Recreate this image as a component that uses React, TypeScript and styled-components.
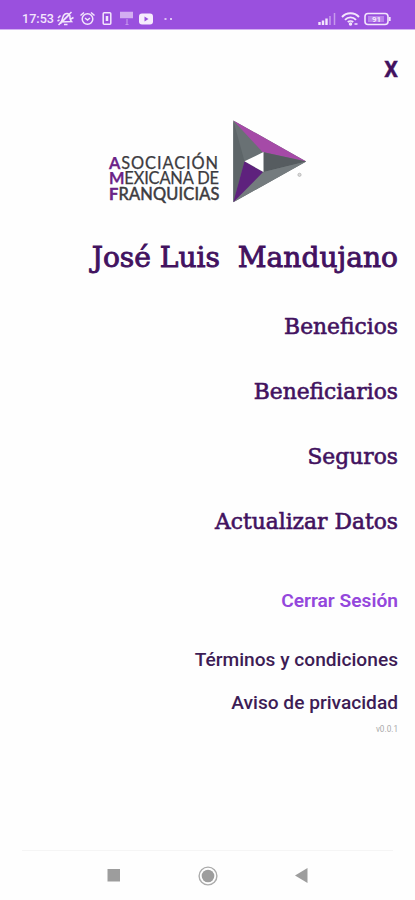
import React from "react";
import styled, { createGlobalStyle } from "styled-components";

const GlobalStyle = createGlobalStyle`
  * { box-sizing: border-box; }
  body { margin: 0; background: #fefefe; }
`;

const slab = `"DejaVu Serif", serif`;
const sans = `Roboto, sans-serif`;
const ink = "#42125f";

const Screen = styled.div`
  width: 100%;
  height: 900px;
  display: flex;
  flex-direction: column;
  overflow: hidden;
  background: #fefefe;
  font-family: ${sans};
`;

const StatusBar = styled.header`
  height: 30px;
  flex: none;
  display: flex;
  justify-content: space-between;
  align-items: flex-end;
  padding: 0 23px 2px 22px;
  background: #9a50de;
  border-bottom: 1px solid #d3b0f1;
  color: #f3e6fc;
`;

const Clock = styled.span`
  font-size: 12.6px;
  font-weight: 500;
  line-height: 16px;
  width: 35px;
`;

const StatusGroup = styled.div`
  display: flex;
  align-items: center;
  height: 17px;
`;

const StatusIcon = styled.svg<{ $gap?: number }>`
  display: block;
  flex: none;
  margin-left: ${(p) => p.$gap ?? 0}px;
  fill: none;
  stroke: #f3e6fc;
  stroke-width: 1.5;
`;

const Content = styled.main`
  flex: 1;
  display: flex;
  flex-direction: column;
  align-items: flex-end;
  padding: 28px 17px 0 0;
`;

const CloseButton = styled.button`
  border: 0;
  padding: 0;
  background: none;
  height: 24px;
  font: 700 21.5px/24px ${sans};
  color: ${ink};
  -webkit-text-stroke: 0.4px ${ink};
`;

const Brand = styled.div`
  align-self: flex-start;
  display: flex;
  align-items: flex-end;
  height: 84px;
  margin: 38px 0 34px 109px;
`;

const BrandName = styled.div`
  width: 124px;
  padding-bottom: 3px;
  font-family: Lato, sans-serif;
  font-size: 16.4px;
  line-height: 15.5px;
  color: #3c3b3f;
`;

const BrandLine = styled.div<{ $tracking: number; $bold?: boolean }>`
  white-space: nowrap;
  letter-spacing: ${(p) => p.$tracking}px;
  -webkit-text-stroke: ${(p) => (p.$bold ? 0.5 : 0.25)}px;
`;

const Initial = styled.span`
  color: #6b2387;
  font-weight: 700;
`;

const BrandMark = styled.svg`
  display: block;
`;

const UserName = styled.h1`
  margin: 0 0 16px;
  font: 400 28.1px/40px ${slab};
  white-space: pre;
  color: ${ink};
  -webkit-text-stroke: 0.9px ${ink};
`;

const Menu = styled.nav`
  display: flex;
  flex-direction: column;
  align-items: flex-end;
  margin-bottom: 32px;
`;

const MenuItem = styled.a`
  font: 400 21.8px/65px ${slab};
  color: ${ink};
  -webkit-text-stroke: 0.6px ${ink};
`;

const LogoutLink = styled.a`
  margin-bottom: 23px;
  font-size: 19.2px;
  font-weight: 600;
  line-height: 30px;
  color: #9447dc;
`;

const LegalLink = styled.a`
  font-size: 19.15px;
  font-weight: 500;
  line-height: 42.5px;
  color: #3d1c55;
`;

const Version = styled.small`
  font-size: 8.2px;
  line-height: 10px;
  color: #aaa;
`;

const SystemNav = styled.footer`
  flex: none;
  height: 50px;
  margin: 0 22px;
  border-top: 1px solid #f5f5f5;
  display: flex;
  justify-content: space-between;
  align-items: center;
  padding: 0 85px;
`;

const NavIcon = styled.svg`
  display: block;
  fill: #9d9d9d;
`;

const MENU = ["Beneficios", "Beneficiarios", "Seguros", "Actualizar Datos"];
const LEGAL = ["Términos y condiciones", "Aviso de privacidad"];

export default function App() {
  return (
    <Screen>
      <GlobalStyle />
      <StatusBar>
        <StatusGroup>
          <Clock>17:53</Clock>
          <StatusIcon width="17" height="17" viewBox="0 0 17 17">
            <path d="M4 12c2-2 1-6.500 4-8c3-1.500 5.500 .5 5 4c0 2 .5 2.500 1.500 3.500zM7 14.500h3.500M1.500 15L14.500 2M3.500 13.500L12 5M1 8l2.500-2.500M.5 11l2-1M14 9l2.500-1.500" />
          </StatusIcon>
          <StatusIcon $gap={5} width="17" height="17" viewBox="0 0 17 17">
            <circle cx="8.500" cy="9" r="5.300" />
            <path d="M6 8l2.500 2L11 8M1.500 5.500L5 2.500M15.500 5.500L12 2.500" />
          </StatusIcon>
          <StatusIcon $gap={6} width="10" height="15" viewBox="0 0 10 15">
            <rect x="1.200" y="1.700" width="7.600" height="11.600" rx="1" />
            <path d="M5 5v5" strokeWidth="2.500" />
          </StatusIcon>
          <StatusIcon $gap={8} width="13" height="17" viewBox="0 0 13 17">
            <path d="M0 5h13" stroke="#d3aef1" strokeWidth="6.500" />
            <path d="M7 9v6M5.500 14.500h3" stroke="#c394ec" strokeWidth="1.200" />
          </StatusIcon>
          <StatusIcon $gap={6} width="14" height="12" viewBox="0 0 14 12">
            <rect width="14" height="11" y=".5" rx="3" fill="#f6ebfd" stroke="none" />
            <path d="M5.500 3.500l4 2.500l-4 2.500z" fill="#9a50de" stroke="none" />
          </StatusIcon>
          <StatusIcon $gap={11} width="9" height="4" viewBox="0 0 9 4">
            <path d="M.5 2h2M6 2h2" strokeWidth="1.700" />
          </StatusIcon>
        </StatusGroup>
        <StatusGroup>
          <StatusIcon width="19" height="14" viewBox="0 0 19 14">
            <path d="M1.500 10v3M5 8.500V13M8.500 6.500V13" strokeWidth="2.400" />
            <path d="M12 4v9M16.500 1v12" stroke="#c79bec" strokeWidth="1.500" />
          </StatusIcon>
          <StatusIcon $gap={4} width="19" height="15" viewBox="0 0 19 15">
            <path d="M1 6c4.500-5 12.500-5 17 0M4 8.800c3-3.300 8-3.300 11 0M6.800 11.200c1.500-1.500 3.900-1.500 5.400 0" strokeWidth="1.900" />
            <circle cx="9.500" cy="13" r="1" fill="#f3e6fc" />
            <path d="M13.500 13h3" />
          </StatusIcon>
          <StatusIcon $gap={4} width="28" height="14" viewBox="0 0 28 14">
            <rect x="1" y="1.500" width="23" height="11" rx="3" strokeWidth="1.600" />
            <path d="M25.800 5v4" strokeWidth="1.700" />
            <rect x="4" y="4" width="16" height="6" fill="#b981ea" stroke="none" />
            <text x="12.500" y="10" textAnchor="middle" fontSize="8" fontWeight="700" fontFamily="Roboto, sans-serif" fill="#f3e6fc" stroke="none">91</text>
          </StatusIcon>
        </StatusGroup>
      </StatusBar>

      <Content>
        <CloseButton aria-label="Cerrar">X</CloseButton>
        <Brand>
          <BrandName>
            <BrandLine $tracking={0.9}><Initial>A</Initial>SOCIACIÓN</BrandLine>
            <BrandLine $tracking={-0.15}><Initial>M</Initial>EXICANA DE</BrandLine>
            <BrandLine $tracking={0.2} $bold><Initial>F</Initial>RANQUICIAS</BrandLine>
          </BrandName>
          <BrandMark width="74" height="84" viewBox="233 120 74 84">
            <path d="M233.300 120.500L306.200 161.400L233.300 202.300z" fill="#697174" />
            <path d="M233.300 120.500L244.500 161.300L233.300 202.300z" fill="#5d6568" />
            <path d="M233.300 120.500L306.200 161.400L262.500 152z" fill="#a54aa7" />
            <path d="M262.500 152L306.200 161.400L263.500 172z" fill="#565c60" />
            <path d="M263.500 172L306.200 161.400L233.300 202.300z" fill="#747b7e" />
            <path d="M244.500 161.300L263 172L233.300 202.300z" fill="#5e217d" />
            <path d="M244.500 161.300L263.500 152V172z" fill="#fff" />
            <circle cx="299.500" cy="174.800" r="1.600" fill="#ddd" stroke="#aaa" strokeWidth=".7" />
          </BrandMark>
        </Brand>
        <UserName>{"José Luis  Mandujano"}</UserName>
        <Menu>
          {MENU.map((label) => (
            <MenuItem key={label}>{label}</MenuItem>
          ))}
        </Menu>
        <LogoutLink>Cerrar Sesión</LogoutLink>
        {LEGAL.map((label) => (
          <LegalLink key={label}>{label}</LegalLink>
        ))}
        <Version>v0.0.1</Version>
      </Content>

      <SystemNav>
        <NavIcon width="13" height="13" viewBox="0 0 13 13">
          <rect x=".5" width="12.500" height="12.500" />
        </NavIcon>
        <NavIcon width="20" height="20" viewBox="0 0 20 20">
          <circle cx="10" cy="10" r="8.900" fill="none" stroke="#ababab" strokeWidth="1.400" />
          <circle cx="10" cy="10" r="6.300" />
        </NavIcon>
        <NavIcon width="13" height="15" viewBox="0 0 13 15">
          <path d="M0 7.500L12.500 0v15z" />
        </NavIcon>
      </SystemNav>
    </Screen>
  );
}
